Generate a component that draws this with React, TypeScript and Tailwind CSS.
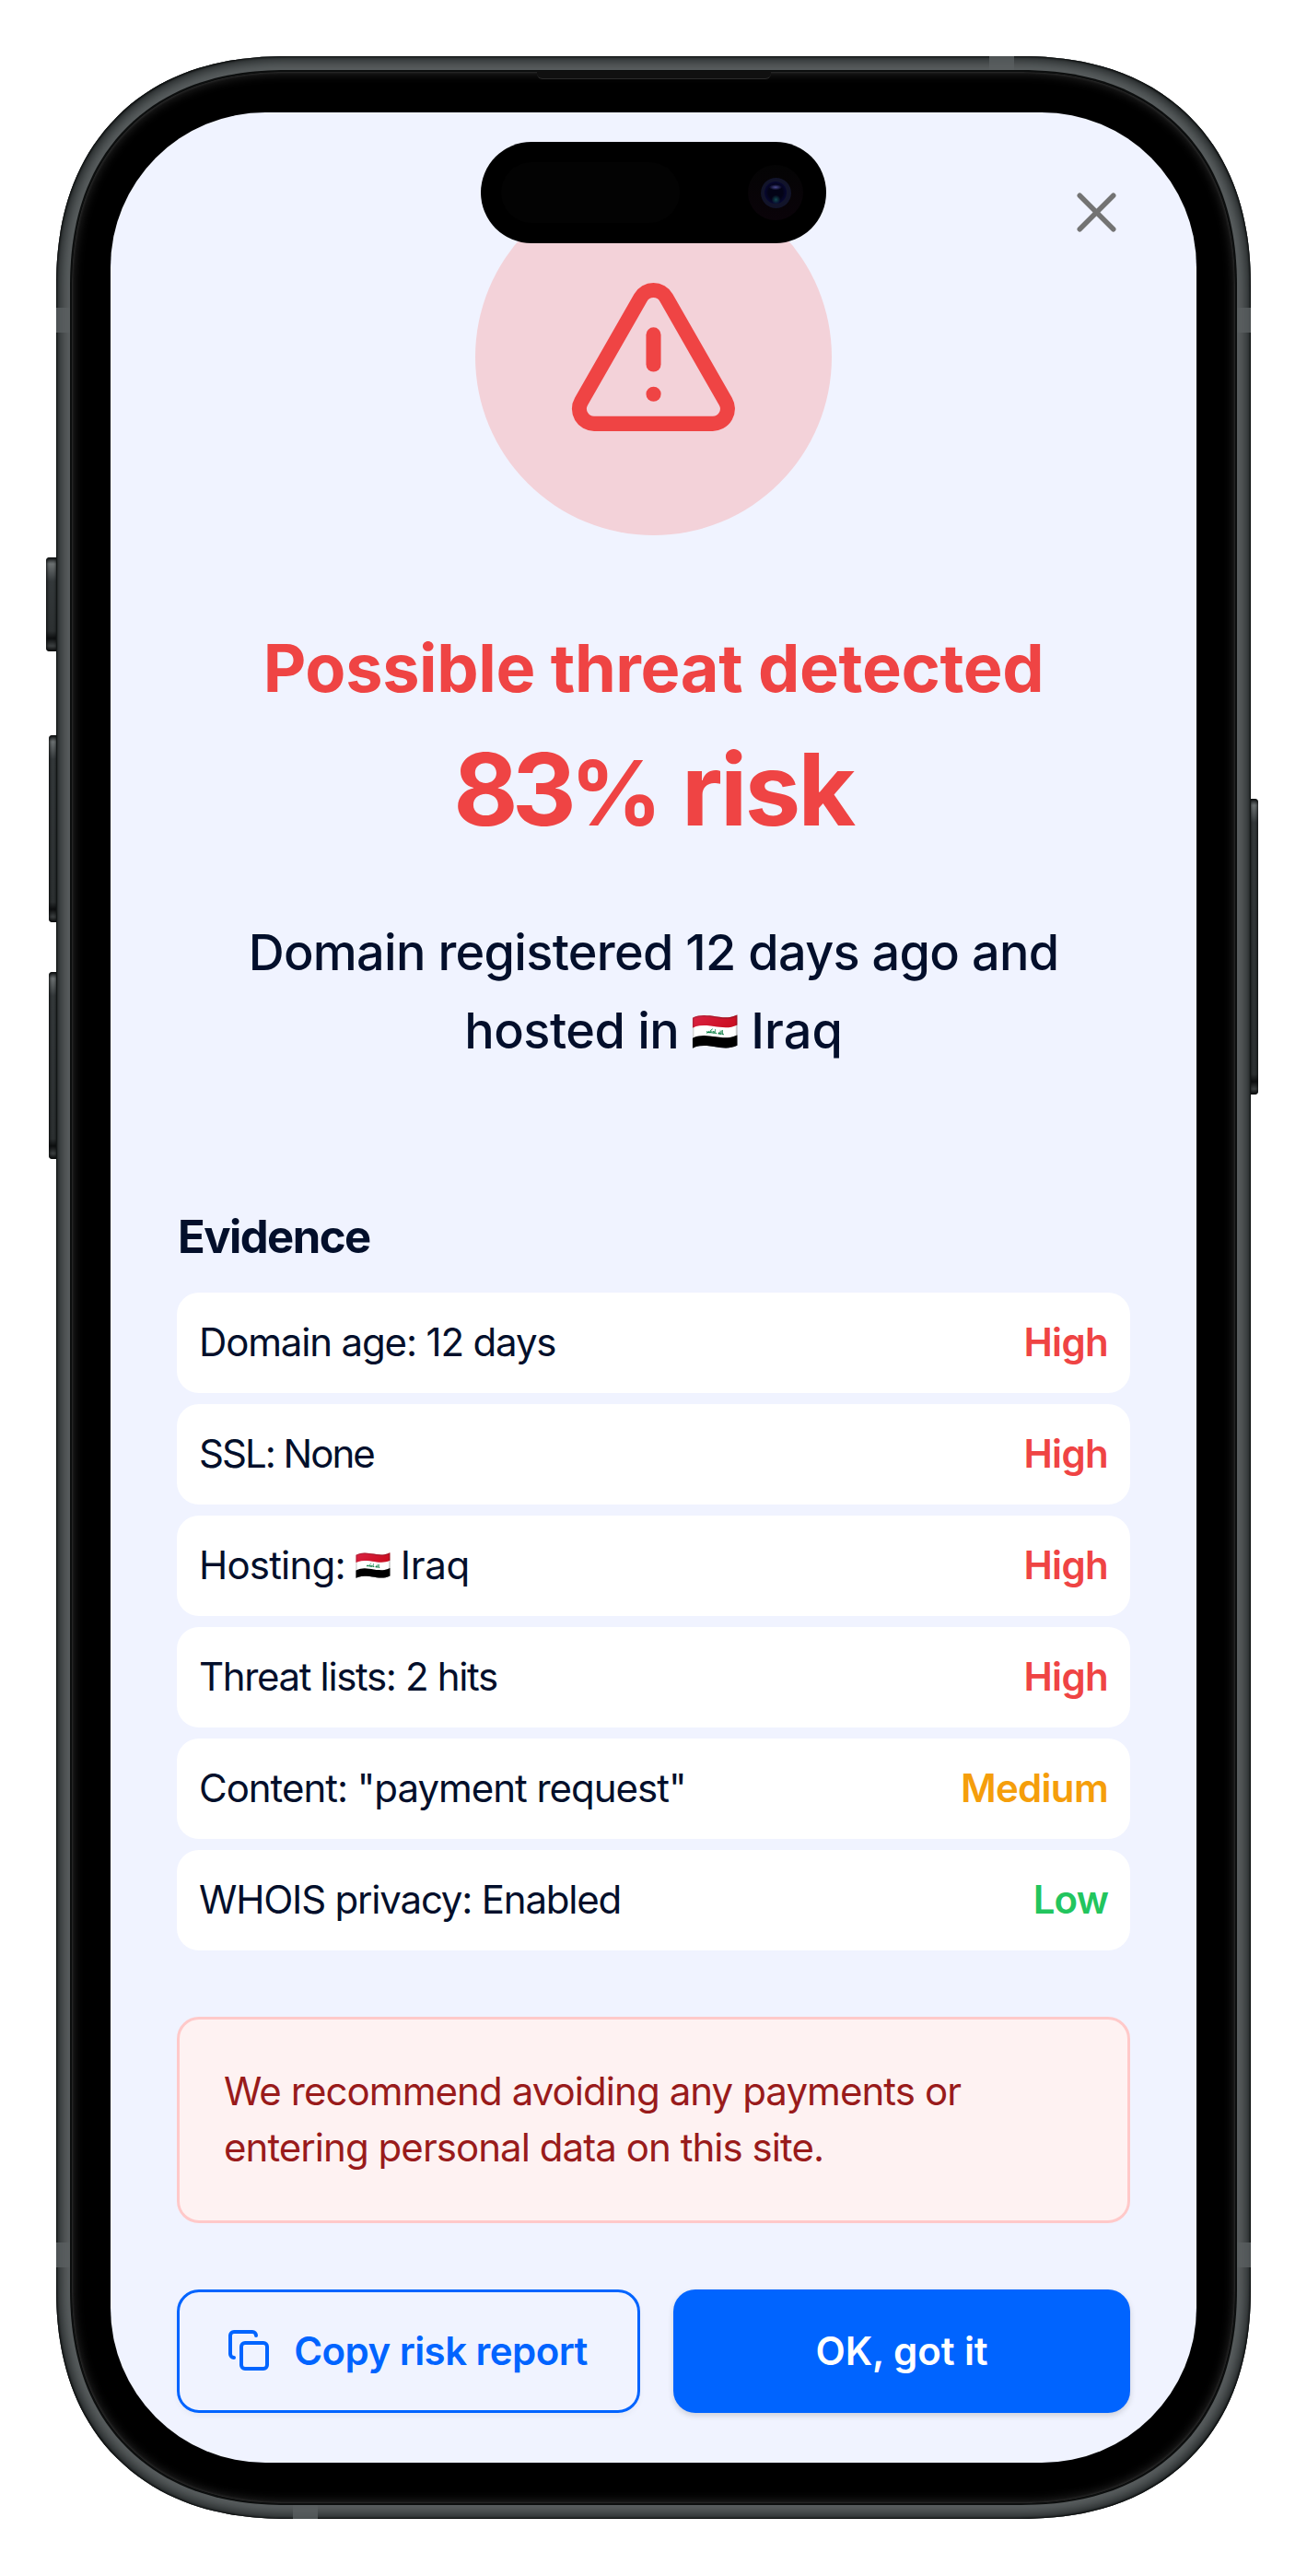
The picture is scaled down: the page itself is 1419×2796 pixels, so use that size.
import { Copy, TriangleAlert, X } from "lucide-react";
import type { ReactNode } from "react";

type Level = "High" | "Medium" | "Low";

const levelColor: Record<Level, string> = {
  High: "text-[#ef4444] tracking-[-0.7px]",
  Medium: "text-[#f59e0b] tracking-[-0.7px]",
  Low: "text-[#22c55e] tracking-[-0.9px]",
};

const evidence: { label: ReactNode; tracking: string; level: Level }[] = [
  { label: "Domain age: 12 days", tracking: "tracking-[-1.16px]", level: "High" },
  { label: "SSL: None", tracking: "tracking-[-2px]", level: "High" },
  {
    label: (
      <>
        <span>Hosting:</span>
        <span className="ml-[10px] mr-[10px] text-[32px] tracking-normal">🇮🇶</span>
        <span className="tracking-[-0.3px]">Iraq</span>
      </>
    ),
    tracking: "tracking-[-0.8px]",
    level: "High",
  },
  { label: "Threat lists: 2 hits", tracking: "tracking-[-1.36px]", level: "High" },
  { label: 'Content: "payment request"', tracking: "tracking-[-1.02px]", level: "Medium" },
  { label: "WHOIS privacy: Enabled", tracking: "tracking-[-1.2px]", level: "Low" },
];

function SideKey({ className }: { className: string }) {
  return (
    <div
      className={
        "absolute bg-[linear-gradient(180deg,#111415_0,#6b7071_7px,#33383a_26px,#2c3031_calc(100%-22px),#0c0e0f_calc(100%-14px),#3c4041_calc(100%-6px),#0b0c0d_100%)] shadow-[inset_0_0_3px_1px_#0b0d0d] " +
        className
      }
    />
  );
}

function AntennaBand({ className }: { className: string }) {
  return <div className={"absolute bg-[#5a5f60]/80 " + className} />;
}

function DynamicIsland() {
  return (
    <div className="absolute left-[402px] top-[32px] flex h-[110px] w-[375px] items-center justify-between rounded-full bg-black pl-[22px] pr-[25px]">
      <div className="h-[66px] w-[194px] rounded-full bg-[#030303]" />
      <div className="flex size-[60px] items-center justify-center rounded-full bg-[linear-gradient(180deg,#040404,#0a0309)]">
        <div className="flex size-[33px] items-center justify-center rounded-full bg-[#12142a]">
          <div className="size-[24px] rounded-full bg-[radial-gradient(ellipse_7px_3px_at_50%_26%,#4a4a90,transparent),radial-gradient(circle_5px_at_52%_82%,#124a52,transparent),radial-gradient(circle_at_50%_50%,#030316_45%,#0c0c50_100%)]" />
        </div>
      </div>
    </div>
  );
}

export default function App() {
  return (
    <main className="h-[2796px] w-[1419px] bg-white pl-[61px] pt-[61px] font-[Inter,sans-serif]">
      <div className="relative h-[2673px] w-[1297px]">
        <SideKey className="left-[-11px] top-[544px] h-[102px] w-[12px] rounded-l-[4px]" />
        <SideKey className="left-[-8px] top-[737px] h-[203px] w-[9px] rounded-l-[4px]" />
        <SideKey className="left-[-8px] top-[994px] h-[203px] w-[9px] rounded-l-[4px]" />
        <SideKey className="right-[-8px] top-[806px] h-[321px] w-[9px] rounded-r-[4px]" />

        <div className="relative h-full w-full overflow-hidden rounded-[225px] bg-[#5a5f60] p-[15px] shadow-[inset_0_0_2px_1px_#0a0c0c,inset_0_0_13px_4px_#1a1e1f] supports-[corner-shape:squircle]:rounded-[250px] supports-[corner-shape:squircle]:[corner-shape:superellipse(1.18)]">
          <AntennaBand className="left-0 top-[273px] h-[27px] w-[17px]" />
          <AntennaBand className="right-0 top-[273px] h-[27px] w-[17px]" />
          <AntennaBand className="bottom-[273px] left-0 h-[27px] w-[17px]" />
          <AntennaBand className="bottom-[273px] right-0 h-[27px] w-[17px]" />
          <AntennaBand className="right-[257px] top-0 h-[17px] w-[27px]" />
          <AntennaBand className="bottom-0 left-[257px] h-[17px] w-[27px]" />

          <div className="relative h-full w-full rounded-[210px] border-2 border-[#0c0e0e] bg-black px-[42px] pb-[44px] pt-[44px] shadow-[inset_0_0_2px_1px_#292929,inset_0_0_12px_1px_#2c2c2c] supports-[corner-shape:squircle]:rounded-[235px] supports-[corner-shape:squircle]:[corner-shape:superellipse(1.18)]">
            <div className="absolute left-1/2 top-[-1px] h-[9px] w-[254px] -translate-x-1/2 rounded-b-[6px] border-b border-[#2c2c2c] bg-[#101010]" />

            <div className="relative h-full w-full overflow-hidden rounded-[168px] bg-[#f0f3ff]">
              <div className="flex flex-col px-[72px] pt-[72px] text-[#030f2b]">
                <div className="flex size-[387px] items-center justify-center self-center rounded-full bg-[#f3d2d9]">
                  <TriangleAlert className="size-[193px] text-[#ef4444]" strokeWidth={2} />
                </div>

                <h1 className="mt-[95px] text-center text-[72px] font-bold leading-[97px] tracking-[-0.35px] text-[#ef4444]">
                  Possible threat detected
                </h1>
                <p className="mt-[23px] flex h-[121px] items-baseline justify-center text-[108px] font-bold leading-[121px] text-[#ef4444]">
                  <span className="tracking-[-6.5px]">83</span>
                  <span className="text-[98px]">%</span>
                  <span className="ml-[21px] tracking-[-2.6px]">risk</span>
                </p>

                <div className="mt-[74px] text-center text-[54px] font-medium leading-[85px]">
                  <p className="tracking-[-0.7px]">Domain registered 12 days ago and</p>
                  <p className="flex h-[85px] items-center justify-center">
                    <span className="tracking-[-0.5px]">hosted in</span>
                    <span className="ml-[13px] mr-[13px] text-[42px]">🇮🇶</span>
                    <span>Iraq</span>
                  </p>
                </div>

                <h2 className="mt-[139px] pl-px text-[49px] font-bold leading-[85px] tracking-[-1.55px]">
                  Evidence
                </h2>
                <ul className="mt-[18px] flex flex-col gap-[12px]">
                  {evidence.map((item, i) => (
                    <li
                      key={i}
                      className="flex h-[109px] items-center justify-between rounded-[24px] bg-white px-[24px] pb-[2px] text-[42px] leading-[60px]"
                    >
                      <span className={"flex items-center whitespace-nowrap " + item.tracking}>
                        {item.label}
                      </span>
                      <span className={"font-semibold " + levelColor[item.level]}>{item.level}</span>
                    </li>
                  ))}
                </ul>

                <div className="mt-[72px] h-[224px] rounded-[24px] border-[3px] border-[#ffc9c9] bg-[#fef2f2] px-[48px] pt-[48px] text-[42px] leading-[60.5px] text-[#991b1b]">
                  <p className="whitespace-nowrap tracking-[-0.93px]">
                    We recommend avoiding any payments or
                  </p>
                  <p className="whitespace-nowrap tracking-[-0.95px]">
                    entering personal data on this site.
                  </p>
                </div>

                <div className="mt-[72px] flex h-[134px] gap-[36px] text-[42px] font-semibold">
                  <button className="flex w-[503px] items-center justify-center rounded-[24px] border-[3px] border-[#0064ff] pb-[2px] pr-[3px] text-[#0064ff] shadow-[0_3px_6px_rgba(0,0,0,0.04)]">
                    <Copy className="mr-[25px] size-[48px]" strokeWidth={2} />
                    <span className="tracking-[-0.55px]">Copy risk report</span>
                  </button>
                  <button className="flex flex-1 items-center justify-center rounded-[24px] bg-[#0064ff] pb-[2px] tracking-[-0.1px] text-white shadow-[0_3px_6px_rgba(0,0,0,0.15)]">
                    OK, got it
                  </button>
                </div>
              </div>

              <DynamicIsland />
              <button
                aria-label="Close"
                className="absolute right-[72px] top-[72px] flex size-[73px] items-center justify-center text-[#737373]"
              >
                <X className="size-[73px]" strokeWidth={1.8} />
              </button>
            </div>
          </div>
        </div>
      </div>
    </main>
  );
}
